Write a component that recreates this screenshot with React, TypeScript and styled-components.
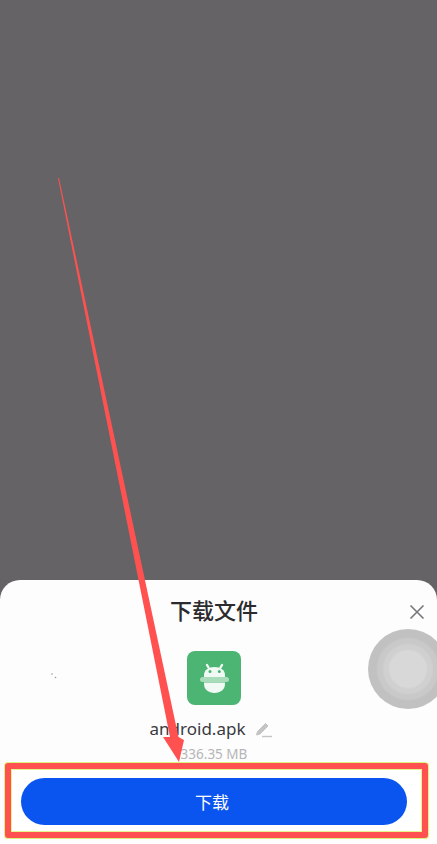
import React from 'react';
import styled, { createGlobalStyle } from 'styled-components';

const GlobalStyle = createGlobalStyle`
  html, body {
    margin: 0;
    padding: 0;
    background: #656366;
  }
  * {
    box-sizing: border-box;
  }
`;

const Page = styled.div`
  position: relative;
  width: 437px;
  height: 844px;
  overflow: hidden;
  display: flex;
  flex-direction: column;
  justify-content: flex-end;
  background: #656366;
  font-family: 'Noto Sans CJK SC', 'Noto Sans', sans-serif;
`;

const Sheet = styled.div`
  position: relative;
  height: 264px;
  padding: 15px 9px 6px 0;
  display: flex;
  flex-direction: column;
  align-items: center;
  background: #fdfdfd;
  border-radius: 20px 20px 0 0;
`;

const Title = styled.div`
  flex: none;
  height: 28px;
  font-size: 22px;
  line-height: 28px;
  font-weight: 500;
  color: #2b2b2d;
`;

const CloseButton = styled.div`
  position: absolute;
  top: 22px;
  right: 11px;
  width: 18px;
  height: 18px;
  color: #77767a;
`;

const FloatingBall = styled.div`
  position: absolute;
  top: 49px;
  left: 368px;
  width: 80px;
  height: 80px;
  border-radius: 50%;
  background: radial-gradient(
    circle at center,
    #d8d8d8 0 18px,
    #d0d0d0 20px 24px,
    #c9c9c9 26px 30px,
    #c1c1c1 32px
  );
`;

const Speck = styled.div`
  position: absolute;
  top: 80px;
  left: 51px;
  width: 6px;
  height: 6px;
  color: #9a9a9a;
`;

const AppIcon = styled.div`
  flex: none;
  margin-top: 28px;
  width: 54px;
  height: 54px;
  border-radius: 8px;
  background: #4cb574;
  display: flex;
  align-items: center;
  justify-content: center;
`;

const NameRow = styled.div`
  flex: none;
  margin-top: 12px;
  height: 24px;
  margin-right: 5px;
  display: flex;
  align-items: center;
  gap: 10px;
`;

const FileName = styled.span`
  font-family: 'Noto Sans', sans-serif;
  font-size: 17px;
  line-height: 24px;
  color: #3a3a3d;
`;

const EditIcon = styled.div`
  width: 18px;
  height: 18px;
  color: #c4c4c4;
`;

const FileSize = styled.div`
  flex: none;
  margin-top: 4px;
  height: 18px;
  font-family: 'Noto Sans', sans-serif;
  font-size: 13.5px;
  line-height: 18px;
  color: #b5b5b7;
`;

const Highlight = styled.div`
  flex: none;
  align-self: flex-start;
  margin-left: 5px;
  width: 423px;
  height: 75px;
  padding: 2px 15px 0 10px;
  display: flex;
  align-items: center;
  background: #ffffff;
  border: 6px solid #ff5250;
  border-radius: 3px;
  box-shadow: 0 0 0 1px #dcf57c, inset 0 0 0 1px #e4f78c;
`;

const DownloadButton = styled.button`
  width: 100%;
  height: 47px;
  border: none;
  border-radius: 24px;
  background: #0a55f0;
  color: #ffffff;
  font-family: inherit;
  font-size: 17px;
  padding: 0 4px 0 0;
`;

const ArrowOverlay = styled.svg`
  position: absolute;
  top: 0;
  left: 0;
  pointer-events: none;
`;

const App = () => (
  <Page>
    <GlobalStyle />
    <Sheet>
      <Title>下载文件</Title>
      <CloseButton>
        <svg width="18" height="18" viewBox="0 0 18 18" fill="none" stroke="currentColor" strokeWidth="1.6">
          <path d="M2.5 2.5 L15.5 15.5 M15.5 2.5 L2.5 15.5" />
        </svg>
      </CloseButton>
      <FloatingBall />
      <Speck>
        <svg width="6" height="6" viewBox="0 0 6 6" fill="currentColor">
          <circle cx="1" cy="1" r="0.8" />
          <circle cx="4.5" cy="4.5" r="0.8" />
        </svg>
      </Speck>
      <AppIcon>
        <svg width="34" height="34" viewBox="0 0 34 34" fill="#f1f9f4">
          <path d="M10 4 L11.5 6.5 M25 4 L23.5 6.5" stroke="#f1f9f4" strokeWidth="2.4" strokeLinecap="round" />
          <path d="M7 16 V14 C7 9 11.5 6 17.5 6 C23.5 6 28 9 28 14 V16 Z" />
          <circle cx="13" cy="10.5" r="1.5" fill="#4cb574" />
          <circle cx="22.3" cy="10.5" r="1.5" fill="#4cb574" />
          <rect x="3" y="16" width="29" height="5" rx="2.5" fill="#a9dcbb" />
          <path d="M7 21.5 H28 V23 C28 28.5 23.5 32 17.5 32 C11.5 32 7 28.5 7 23 Z" />
        </svg>
      </AppIcon>
      <NameRow>
        <FileName>android.apk</FileName>
        <EditIcon>
          <svg width="18" height="18" viewBox="0 0 18 18" fill="none" stroke="currentColor" strokeWidth="2">
            <path d="M1.5 14 L2.5 10.5 L10.5 2.5 L13 5 L5 13 Z" fill="currentColor" strokeWidth="1" />
            <path d="M7 15.5 H17" strokeWidth="1.4" />
          </svg>
        </EditIcon>
      </NameRow>
      <FileSize>336.35 MB</FileSize>
      <Highlight>
        <DownloadButton>下载</DownloadButton>
      </Highlight>
    </Sheet>
    <ArrowOverlay width="437" height="844" viewBox="0 0 437 844">
      <polygon points="58,178 59,178 178.5,737 184,740 179,762 163,737 170,737" fill="#ff5250" />
    </ArrowOverlay>
  </Page>
);

export default App;
